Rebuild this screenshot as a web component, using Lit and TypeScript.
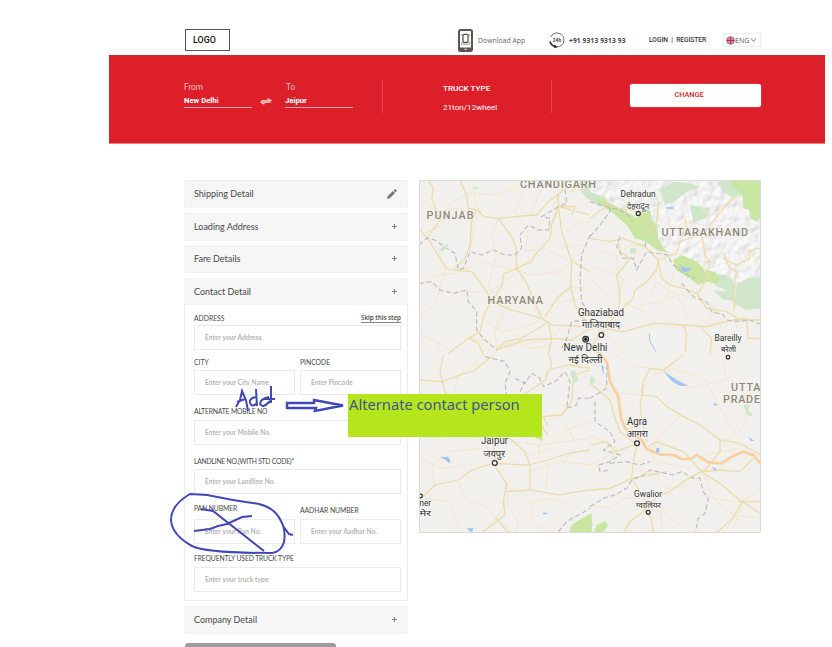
import { LitElement, html, svg, css } from "lit";
import { customElement, property } from "lit/decorators.js";

@customElement("route-map")
class RouteMap extends LitElement {
  static styles = css`
    :host { display: block; width: 342px; height: 353px; }
    svg { display: block; font-family: Roboto, "Noto Sans", sans-serif; }
    .minor { fill: none; stroke: #f3e6ca; stroke-width: 3; stroke-linejoin: round; }
    .road { fill: none; stroke: #ecdba8; stroke-width: 3.8; stroke-linejoin: round; }
    .highway { fill: none; stroke: #f9cfa0; stroke-width: 8; stroke-linejoin: round; }
    .border { fill: none; stroke: #b8b8ba; stroke-width: 3.2; stroke-dasharray: 15 8; }
    .water { fill: #9fc5f3; }
    .park { fill: #c8e5a2; }
    .wood { fill: #d0e6cb; }
    .halo { paint-order: stroke; stroke: #f5f4f1; stroke-width: 2px; }
    .state { fill: #8f8878; stroke-width: 1.5px; font-weight: 500; }
    .city { fill: #333; }
    .pin { fill: #fff; stroke: #333; stroke-width: 1.3; }
  `;

  private state(x: number, y: number, w: number, text: string) {
    return svg`<text class="state halo" x=${x} y=${y} font-size="10.8" textLength=${w}>${text}</text>`;
  }

  private city(x: number, y: number, w: number, size: number, text: string) {
    return svg`<text class="city halo" x=${x} y=${y} font-size=${size} textLength=${w} lengthAdjust="spacingAndGlyphs">${text}</text>`;
  }

  render() {
    return html`<svg width="342" height="353" viewBox="419 180 342 353">
      <defs>
        <filter id="relief" x="0" y="0" width="100%" height="100%">
          <feTurbulence type="fractalNoise" baseFrequency="0.035" numOctaves="2" seed="8" />
          <feDiffuseLighting surfaceScale="9" lighting-color="#fff"><feDistantLight azimuth="225" elevation="55" /></feDiffuseLighting>
          <feColorMatrix type="matrix" values=".4 0 0 0 .56 0 .4 0 0 .56 0 0 .4 0 .56 0 0 0 1 0" />
          <feComposite in2="SourceGraphic" operator="in" />
        </filter>
      </defs>
      <rect x="419" y="180" width="342" height="353" fill="#f1f0ed" />
      <g transform="translate(590 175) scale(.33333)">
        <path filter="url(#relief)" fill="#ecebea" d="M0 10H520V380L490 370 440 330 395 320 380 300 330 265 260 235 230 235 200 200 185 140 120 115 50 80 0 75Z" />
        <path class="wood" d="M0 50L40 65 60 90 30 95 0 75ZM210 45L250 20 300 25 330 35 290 50 260 75 225 90ZM300 90L360 100 350 130 310 140ZM380 20L450 15 460 50 430 70 400 50ZM350 295L410 300 440 330 470 310 520 305V400L470 405 430 385 400 340 380 335ZM370 345L410 350 430 375 400 375ZM120 220L140 220 138 235 120 235Z" />
        <path class="park" d="M15 70L60 85 110 110 140 130 160 105 180 100 185 135 200 150 205 190 220 220 240 235 200 225 170 200 135 190 110 150 70 115 25 85ZM250 255L275 240 320 260 345 285 375 290 390 315 375 325 350 320 325 330 285 300 258 285ZM410 10H520V120L500 140 480 130 478 105 460 100 458 60 430 35Z" />
        <path class="water" d="M270 270L285 280 305 275 298 288 280 292ZM228 97H250V101H228Z" />
        <path d="M178 475L180 500 198 530" fill="none" stroke="#9fc5f3" stroke-width="3" />
      </g>
      <g transform="translate(415 175) scale(.33333)">
        <path class="minor" d="M12 70L70 110 130 100 180 115M20 180L80 150 100 90 160 55 240 60 300 40M170 15L180 70 195 115 180 140 165 230M12 330L70 300 130 295M12 420L60 390 90 290M130 290L200 260 300 285 360 300 430 290 470 260 520 250M250 130L230 180 245 240 220 330 260 400 240 470 245 525M300 30L320 70 300 110 340 170 330 230 380 220 430 240 470 258M350 125L370 60 400 20M430 95L400 165 440 220 500 210M130 370L150 350 210 350 265 330 310 280 350 250M12 480L60 495 110 530M390 430L440 380 520 370M370 430L355 370 330 320 305 280M160 490L220 500 250 460 270 400M270 400L320 370 410 390 470 335 525 340M380 430L350 450 260 470 200 430M440 180L480 150 525 140M245 525L290 500 330 510 410 490M410 100L440 50 480 30 525 80M60 495L80 530M300 470L330 520 400 515 440 450M12 130L70 135 150 125" />
        <path class="road" d="M40 15L55 40 50 70 75 135 35 190M135 15L155 60 160 100 185 105 170 140 165 210 150 250 120 280M12 160L45 200 95 283 170 290 205 335 230 375 205 425 195 470 160 490 100 535M190 105L205 125 250 130 330 122 365 120 400 80 440 50 455 15M250 130L290 185 303 215 305 280 330 315 355 370 380 428 410 450 525 455M430 95L410 150 405 190 360 240 350 260 265 297 262 330 230 380 290 405 380 430M430 95L440 170 470 258 467 335 480 390 500 425 525 450M470 258L525 290M467 335L430 365 390 425M400 440L410 490 400 540M430 95L525 120M160 490L190 505 205 540M245 525L270 500 320 490 370 460 400 440M245 525L330 495 410 490 470 495 525 460M470 50L500 20 525 25M430 60L430 95 480 95 470 120" />
        <path class="border" d="M12 210L35 190 60 195 95 220 120 235 130 285 145 280 165 230 200 240 235 225 270 240 300 240 320 220 315 180 340 150 370 165 400 165 405 130 380 125 430 95 455 85 450 40M12 325L50 320 75 345 115 355 155 345 160 380 185 410 185 465 205 490 245 525M525 180L500 240 495 310 500 380 525 420M515 435L470 440 455 490 440 520M500 20L510 50 525 60" />
        <path class="wood" d="M475 15H525V75L500 55 490 30ZM70 225L100 205 95 220 80 230ZM175 35H188V42H175Z" />
      </g>
      <g transform="translate(590 175) scale(.33333)">
        <path class="minor" d="M0 275L60 290 100 310 85 375M90 230L120 210 170 215M200 320L240 350 310 370 380 400 350 440M210 395L240 340 250 290M200 320L180 370 240 440 290 460M150 390L220 380 260 360 300 440M30 230L80 240 85 300M0 310L40 350 80 400M100 380L160 410 200 450M210 130L250 160 290 140 340 150M340 70L340 110 380 120 400 90 440 60M330 180L350 220 340 280 360 310M470 210L500 260 520 280M440 320L430 400 440 460M370 400L400 440 340 455M0 440L60 490 100 535" />
        <path class="road" d="M0 190L60 200 100 190 165 215 205 255 260 235 270 200 340 175 380 125 410 90 440 60M205 255L200 285 165 325 135 345 130 370 80 415 0 520M205 255L215 310 240 330 280 340 320 355 350 400 410 410 450 435 520 435M85 200L90 230 120 250 80 300 90 360 85 410M0 130L55 90 40 60M60 95L140 110 165 135 180 180 200 140 205 80 190 50M265 185L290 160 285 130M400 250L440 270 480 250 475 230 500 220 520 220M335 180L345 240 360 260 350 310 325 355M400 235L420 280 440 290 430 350 435 400M0 455L100 470 190 445 280 450 350 455 430 435 470 430M280 450L290 480 285 530M330 455L365 490 360 540M470 430L475 490 520 490" />
        <path class="border" d="M0 80L50 95 90 105 120 125M0 185L30 150 60 110 60 90M90 185L80 215 100 250 130 250 140 285 170 230 200 235 235 240 245 265 280 295 315 310M275 325L310 365 350 380 365 410 400 420 410 435 450 440 480 435 515 450M165 215L170 190" />
      </g>
      <g transform="translate(415 355) scale(.33333)">
        <path class="minor" d="M12 180L60 150 110 155 130 60 190 20M12 240L60 250 130 235 200 250 240 320M60 390L50 330 100 290 200 280M30 430L100 440 130 500 120 540M130 380L150 430 220 460 240 490M240 490L280 440 270 380M270 440L310 500 300 540M345 300L400 280 440 230 525 200M345 350L440 320 525 330M300 400L350 440 350 500 400 530M350 440L420 430 480 460M380 240L370 300 400 340 390 410M280 260L380 270 525 250M450 200L480 260 450 320M12 310L80 340 150 330M200 530L240 490 290 530" />
        <path class="road" d="M85 0L75 50 90 110 120 160M12 75L80 80 180 45 235 0M12 435L60 390 130 375 170 345 235 325 340 330 400 315 460 295 525 285M235 325L275 385 265 440 270 480 205 530M240 485L285 540M235 250L240 320M285 250L330 290 345 330 345 405 430 420 525 405M270 410L345 405M525 40L460 30 400 45 390 75 340 110 310 130M405 0L410 40M400 215L385 185 440 180 470 140 475 60 525 45M400 240L360 190" />
        <path class="border" d="M210 5L270 20 285 50 270 85 275 120M300 70L330 85 350 55 375 70 385 95 420 80 450 50 465 80 455 160 485 150 490 130 525 130M315 110L330 80M430 530L455 500 525 460" />
        <path class="park" d="M460 540L470 510 500 490 530 475V540ZM355 245L380 220 383 258Z" />
        <path class="wood" d="M465 50L480 45 490 75 475 85Z" />
        <path class="water" d="M76 307L100 305 106 317 103 325 92 315ZM155 520L175 520 170 535ZM383 473H397V478H383Z" />
      </g>
      <g transform="translate(590 355) scale(.33333)">
        <path class="minor" d="M80 0L110 30 180 40M65 120L110 190 140 260M220 30L290 100 410 75 400 20M250 40L350 80 380 140 440 240 390 260M190 280L220 230 270 185M150 120L60 110 0 60M150 110L190 60 250 40M0 330L60 300 130 270M180 290L200 320 300 340 340 300 450 280M130 340L200 360 230 400 300 390M210 440L230 480 280 520M170 460L210 470 220 530M340 360L370 430 430 480 400 540M370 430L450 440 520 400M460 440L430 520M430 480L520 490M440 240L470 200 460 100M0 450L60 460 100 430 150 430M0 240L80 280 60 320 0 340" />
        <path class="road" d="M0 85L60 135 75 190 90 230 135 265M155 120L150 160 170 260M155 120L160 80 180 40 220 45 280 0M155 120L200 125 230 155 290 190 330 210 390 255 450 265 520 305M0 270L50 260 75 290 130 270M140 270L130 320 125 370 165 435M0 405L60 400 125 370 230 350M175 275L200 260 280 290 340 355 390 385 455 440 520 480M340 350L390 345 450 350 490 310M390 255L390 290 350 340 280 380 240 410 200 425 185 450 120 500 100 535M165 465L185 495 190 540M455 440H520M455 440L430 490 370 540" />
        <path class="highway" d="M20 -15L35 0 52 25 60 80 85 125 92 185 105 220 155 255 170 282 210 298 250 300 275 312 305 310 320 300 355 322 395 325 425 305 460 290 490 300 515 330" />
        <path class="border" d="M50 30L50 100 0 130M15 140L15 200 60 230 75 260 40 285 90 300 60 320 25 330 30 350 60 345M0 455L40 430 75 420 110 400 125 375 160 360 180 345 250 360 275 350 310 370 330 370 340 410 355 430 345 475 325 490 315 535M60 325L110 320 150 330 180 320" />
        <path class="park" d="M0 480L8 510 0 520ZM10 540L20 510 45 498 55 510 35 540Z" />
        <path class="wood" d="M460 150L480 150 475 165 490 180 475 185ZM0 65L15 70 12 85 0 85Z" />
        <path class="water" d="M220 48L260 75 295 92 270 92 245 78ZM33 30L42 35 40 60ZM370 143L385 150 372 152ZM475 245L493 258H482ZM365 335L383 343 372 346ZM198 280H208V292H198Z" />
      </g>
      ${this.state(520, 188.3, 76, "CHANDIGARH")}
      ${this.state(426.5, 219, 47, "PUNJAB")}
      ${this.state(487.5, 303.5, 55.5, "HARYANA")}
      ${this.state(661.5, 236, 86.5, "UTTARAKHAND")}
      ${this.state(731, 391, 29.5, "UTTA")}
      ${this.state(723, 403, 37, "PRADE")}
      ${this.city(620.5, 197.3, 35, 8.5, "Dehradun")}
      ${this.city(627, 208.5, 22, 8.6, "देहरादून")}
      ${this.city(578, 316, 46, 10, "Ghaziabad")}
      ${this.city(582, 328, 38, 9.6, "गाजियाबाद")}
      ${this.city(563.5, 351.3, 44, 10.5, "New Delhi")}
      ${this.city(568.5, 363, 34, 9.6, "नई दिल्ली")}
      ${this.city(714.5, 341, 27, 8.5, "Bareilly")}
      ${this.city(721, 352, 15, 8.6, "बरेली")}
      ${this.city(627, 424.5, 20, 10, "Agra")}
      ${this.city(627, 437, 21, 9.6, "आगरा")}
      ${this.city(481, 444, 27, 10, "Jaipur")}
      ${this.city(483.5, 456.5, 21.5, 9.6, "जयपुर")}
      ${this.city(634, 496.5, 28, 8.5, "Gwalior")}
      ${this.city(636, 507.5, 25, 8.6, "ग्वालियर")}
      ${this.city(419.5, 506, 11.5, 8.5, "ner")}
      ${this.city(419.5, 516, 11.5, 8.6, "मेर")}
      <g class="pin">
        <circle cx="638.3" cy="213.5" r="2" /><circle cx="601.3" cy="335" r="2.3" />
        <circle cx="728" cy="357.2" r="1.8" /><circle cx="637" cy="443.3" r="2.4" />
        <circle cx="494.8" cy="463" r="2.4" /><circle cx="648.2" cy="512.2" r="1.9" />
        <circle cx="420.5" cy="496" r="1.8" /><circle cx="585.7" cy="339.3" r="2.8" />
      </g>
      <circle cx="585.7" cy="339.3" r="1.7" fill="#222" />
      <rect x="419.5" y="180.5" width="341" height="352" fill="none" stroke="#dbdbd9" />
    </svg>`;
  }
}

@customElement("form-field")
class FormField extends LitElement {
  @property() label = "";
  @property() hint = "";
  @property() action = "";
  static styles = css`
    :host { display: block; font-family: Lato, sans-serif; }
    .head { display: flex; justify-content: space-between; height: 14px; line-height: var(--label-line, 14px); font-size: 6.8px; letter-spacing: var(--label-spacing, 0); color: #484848; white-space: nowrap; }
    .skip { height: 9px; margin-top: 3px; font: 600 6.3px/8px "Noto Sans", sans-serif; letter-spacing: -.07px; color: #555; border-bottom: 1px solid #888; box-sizing: border-box; }
    .box { height: 25px; box-sizing: border-box; border: 1px solid #ebebeb; background: #fff; padding-left: 10px; font: bold 6.6px/22px Lato, sans-serif; color: #b4b4b4; white-space: nowrap; letter-spacing: .07px; }
  `;
  render() {
    return html`<div class="head"><span>${this.label}</span>${this.action ? html`<span class="skip">${this.action}</span>` : ""}</div>
      <div class="box">${this.hint}</div>`;
  }
}

@customElement("app-root")
class AppRoot extends LitElement {
  static styles = css`
    :host { display: block; position: relative; width: 832px; height: 647px; overflow: hidden; background: #fff; font-family: Roboto, sans-serif; }
    header { height: 55px; box-sizing: border-box; padding: 25px 71px 0 185px; display: flex; align-items: center; white-space: nowrap; }
    .logo { width: 45px; height: 22px; box-sizing: border-box; border: 1px solid #555; padding-left: 7px; font: 500 8.9px/20px Roboto; color: #111; margin-right: 228px; }
    .app { font: 6.9px "Open Sans"; color: #666; margin-left: 5px; width: 71px; }
    .phone { font: bold 6.6px "Open Sans"; color: #444; margin-left: 4px; width: 80px; letter-spacing: .15px; }
    .login { font: 500 6.6px Roboto; color: #333; width: 74px; }
    .lang { display: flex; align-items: center; gap: 0; width: 38px; height: 14px; box-sizing: border-box; border: 1px solid #eee; padding-left: 2px; font: 7px "Open Sans"; color: #555; }
    .banner { margin-left: 109px; width: 716px; height: 89px; box-sizing: border-box; background: #dc1f28; border-top: 1px solid #b83038; border-bottom: 1px solid #ee8084; padding: 24px 64px 0 75px; display: flex; align-items: flex-start; color: #fff; }
    .place { width: 68px; border-bottom: 1px solid #f2a5a8; height: 28px; box-sizing: border-box; }
    .place.to { width: 68px; height: 28px; }
    .cap { font-size: 8.2px; line-height: 15px; color: #f6c0c2; }
    .to .cap { padding-left: 1px; }
    .name { font: bold 7.7px/12px Roboto; }
    .to .name { line-height: 11px; }
    .swap { margin: 17px 12px 0 7px; width: 14px; }
    .rule { width: 1px; height: 33px; background: #e4484f; }
    .place + .rule { margin-left: 29px; }
    .truck { margin-left: 60px; width: 108px; font-size: 8.1px; }
    .truck b { display: block; font-weight: 500; line-height: 16px; }
    .truck span { line-height: 23px; display: block; }
    .change { margin: 4px 0 0 78px; width: 131px; height: 23px; border-radius: 3px; background: #fff; box-shadow: 0 0 1px #fff; color: #c92630; font: 500 7.3px/22px Roboto; text-align: center; box-sizing: border-box; padding-right: 13px; }
    main { display: flex; gap: 11px; padding: 36px 0 0 184px; align-items: flex-start; height: 503px; box-sizing: border-box; }
    .steps { width: 224px; }
    .step { height: 28px; box-sizing: border-box; background: #f6f6f6; border: 1px solid #f2f2f2; display: flex; align-items: center; justify-content: space-between; padding: 0 10px 1px 9px; margin-bottom: 4.7px; font: 9px Lato; color: #484848; }
    .step.open { margin-bottom: 0; height: 27px; padding-bottom: 0; }
    .mark { display: block; }
    .panel { height: 296px; box-sizing: border-box; border: 1px solid #ececec; border-top: 0; padding: 6px 6px 0 9px; margin-bottom: 5px; }
    .pair { display: grid; grid-template-columns: 101px 101px; column-gap: 5px; }
    .city { margin-top: 6px; --label-line: 13px; }
    .mobile { margin-top: 11px; --label-line: 10px; --label-spacing: -.17px; }
    .landline { margin-top: 10px; --label-line: 12px; --label-spacing: -.24px; }
    .ids { margin-top: 11px; }
    .pan { --label-line: 7px; --label-spacing: -.12px; }
    .aadhar { --label-line: 11px; --label-spacing: -.04px; }
    .truck-type { margin-top: 9px; --label-line: 10px; --label-spacing: -.14px; }
    .submit { margin: 9px 0 0 1px; width: 151px; height: 24px; background: #9d9d9d; border-radius: 3px; }
    .note { position: absolute; left: 348px; top: 394px; width: 194px; height: 43px; box-sizing: border-box; padding-left: 1px; background: #b5e61d; color: #3f5590; font: 14.7px/21px "Noto Sans", sans-serif; white-space: nowrap; }
    .ink { position: absolute; left: 0; top: 0; fill: none; stroke: #3f48b4; stroke-width: 2; pointer-events: none; }
  `;

  private step(title: string, edit = false, open = false) {
    return html`<div class="step ${open ? "open" : ""}"><span>${title}</span>${edit
      ? html`<svg class="mark" width="10" height="10" viewBox="0 0 10 10"><path fill="#777" d="M0 10L.7 7.2 6 2 8 4 2.8 9.3ZM6.6 1.4L7.6.4Q8.2 0 8.8.5L9.5 1.2Q10 1.8 9.5 2.4L8.6 3.4Z" /></svg>`
      : html`<svg class="mark" width="5" height="5" viewBox="0 0 5 5"><path stroke="#777" stroke-width=".9" d="M2.5 0V5M0 2.5H5" /></svg>`}</div>`;
  }

  render() {
    return html`
      <header>
        <div class="logo">LOGO</div>
        <svg width="15" height="23" viewBox="0 0 15 23" fill="none">
          <rect x="1" y="1" width="13" height="21" rx="1.5" stroke="#5e5552" stroke-width="2" />
          <path d="M1 18.5H14V21.5H1Z" fill="#5e5552" /><path d="M6.5 20.3H8.5" stroke="#fff" />
          <path d="M3.3 5.2V7M11.7 5.2V7M3.3 13V15M11.7 13V15M3 15.3H12" stroke="#888" stroke-width=".7" />
          <rect x="5" y="5.3" width="5" height="8.2" rx=".8" stroke="#555" stroke-width="1.3" />
        </svg>
        <span class="app">Download App</span>
        <svg width="16" height="16" viewBox="0 0 16 16" fill="none" stroke="#444">
          <path d="M1.7 5A7 7 0 1 1 8 15M1.2 9Q1.6 12 4 14" stroke-width=".8" />
          <path d="M1 10Q2 13.5 6.5 14.6" stroke-width="1.8" /><path d="M5.5 13L8 15 5.5 15.8Z" fill="#333" />
          <text x="8" y="9.5" font-family="Roboto" font-size="5" font-weight="bold" text-anchor="middle" stroke="none" fill="#444">24h</text>
        </svg>
        <span class="phone">+91 9313 9313 93</span>
        <span class="login">LOGIN &nbsp;|&nbsp; REGISTER</span>
        <div class="lang">
          <svg width="9" height="9" viewBox="0 0 9 9"><clipPath id="disc"><circle cx="4.5" cy="4.5" r="4" /></clipPath>
            <g clip-path="url(#disc)"><path fill="#46518c" d="M0 0H9V9H0Z" /><path stroke="#eee" stroke-width="1.2" d="M0 0L9 9M9 0L0 9" /><path stroke="#d33f4e" stroke-width=".6" d="M0 0L9 9M9 0L0 9" /><path stroke="#eee" stroke-width="2.2" d="M4.5 0V9M0 4.5H9" /><path stroke="#d3263a" stroke-width="1.4" d="M4.5 0V9M0 4.5H9" /></g></svg>
          <span>ENG</span>
          <svg width="8" height="6" viewBox="0 0 8 6"><path d="M2 1.2L4.5 4.5 7 1.2" fill="none" stroke="#666" stroke-width=".8" /></svg>
        </div>
      </header>
      <section class="banner">
        <div class="place"><div class="cap">From</div><div class="name">New Delhi</div></div>
        <svg class="swap" width="14" height="9" viewBox="0 0 14 9"><path d="M2.5 3.6H11L8.5 1.8 12.5 3.6M11.5 5.2H3L5.5 7 1.5 5.2" fill="none" stroke="#f6bdc0" stroke-width="1.4" /></svg>
        <div class="place to"><div class="cap">To</div><div class="name">Jaipur</div></div>
        <div class="rule"></div>
        <div class="truck"><b>TRUCK TYPE</b><span>21ton/12wheel</span></div>
        <div class="rule"></div>
        <div class="change">CHANGE</div>
      </section>
      <main>
        <div class="steps">
          ${this.step("Shipping Detail", true)}
          ${this.step("Loading Address")}
          ${this.step("Fare Details")}
          ${this.step("Contact Detail", false, true)}
          <div class="panel">
            <form-field label="ADDRESS" hint="Enter your Address" action="Skip this step"></form-field>
            <div class="pair city">
              <form-field label="CITY" hint="Enter your City Name"></form-field>
              <form-field label="PINCODE" hint="Enter Pincode"></form-field>
            </div>
            <form-field class="mobile" label="ALTERNATE MOBILE NO" hint="Enter your Mobile No."></form-field>
            <form-field class="landline" label="LANDLINE NO.(WITH STD CODE)*" hint="Enter your Landline No."></form-field>
            <div class="pair ids">
              <form-field class="pan" label="PAN NUBMER" hint="Enter your Pan No."></form-field>
              <form-field class="aadhar" label="AADHAR NUMBER" hint="Enter your Aadhar No."></form-field>
            </div>
            <form-field class="truck-type" label="FREQUENTLY USED TRUCK TYPE" hint="Enter your truck type"></form-field>
          </div>
          ${this.step("Company Detail")}
          <div class="submit"></div>
        </div>
        <route-map></route-map>
      </main>
      <div class="note">Alternate contact person</div>
      <svg class="ink" width="832" height="647" viewBox="0 0 832 647">
        <path d="M236 407L240 400 242 391 246 400 248 411M237 402L245 399M256 389L257 406M256 397Q249 398 250 403Q252 408 257 403M271 386V403M269 397Q260 399 260 404Q263 409 270 401M264 399L275 399" />
        <path stroke-width="2.4" d="M287 403H314V400L343 405.5 315 411 316 408H287Z" />
        <path d="M190 494Q171 505 171 520Q172 535 192 546Q206 553 272 553Q281 552 284 542Q286 530 281 521Q275 508 259 504Q245 502 233 500L207 495ZM283 526L289 534 293 535M201 509L213 511 264 551M194 531L210 529 218 526 227 524 242 517 252 516" />
      </svg>`;
  }
}
